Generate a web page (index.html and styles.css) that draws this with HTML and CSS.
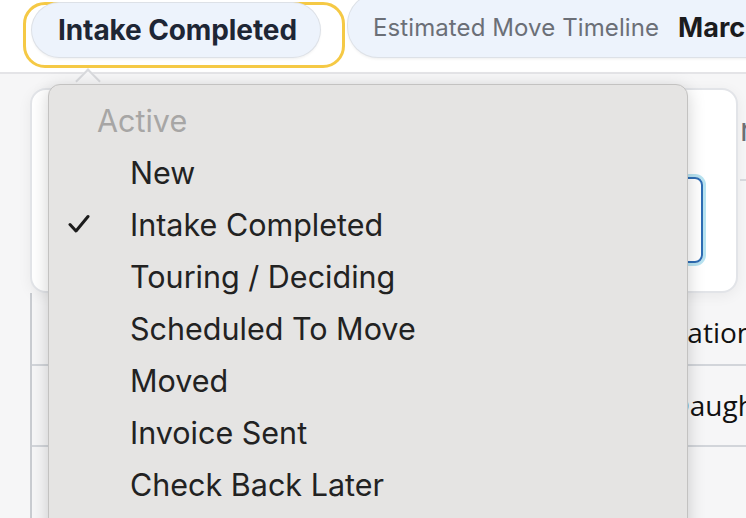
FILE: index.html
```html
<!DOCTYPE html>
<html>
<head>
<meta charset="utf-8">
<link rel="stylesheet" href="styles.css">
</head>
<body>
<header class="topbar">
  <div class="focus-ring">
    <div class="pill pill-status">Intake Completed</div>
  </div>
  <div class="pill pill-timeline">
    <span class="pill-label">Estimated Move Timeline</span>
    <span class="pill-value">March 2025</span>
  </div>
</header>
<main class="content">
  <div class="card-row">
    <section class="card">
      <div class="input-focus"></div>
    </section>
    <div class="side">
      <div class="side-title">r</div>
      <div class="side-line"></div>
    </div>
  </div>
  <div class="table">
    <div class="row row-first"><span class="cell-text">Relation</span></div>
    <div class="row row-second"><span class="cell-text cell-shift">Daughter</span></div>
  </div>
</main>
<div class="caret"></div>
<div class="menu">
  <div class="menu-header">Active</div>
  <div class="menu-item">New</div>
  <div class="menu-item selected">
    <svg class="check" width="22" height="20" viewBox="0 0 22 20"><path d="M2 10.5 L8 17 L20 2.5" fill="none" stroke="#1c1c1c" stroke-width="3" stroke-linecap="round" stroke-linejoin="round"/></svg>
    Intake Completed
  </div>
  <div class="menu-item">Touring / Deciding</div>
  <div class="menu-item">Scheduled To Move</div>
  <div class="menu-item">Moved</div>
  <div class="menu-item">Invoice Sent</div>
  <div class="menu-item">Check Back Later</div>
</div>
</body>
</html>
```

FILE: styles.css
```css
* { box-sizing: border-box; }
html, body {
  margin: 0;
  padding: 0;
}
body {
  width: 746px;
  height: 518px;
  overflow: hidden;
  position: relative;
  background: #f6f6f7;
  font-family: Inter, "Noto Sans", sans-serif;
}
.topbar {
  height: 74px;
  background: #ffffff;
  border-bottom: 2px solid #e4e4e7;
  display: flex;
  align-items: flex-start;
  white-space: nowrap;
  overflow: hidden;
}
.focus-ring {
  margin-left: 23px;
  margin-top: 2px;
  width: 322px;
  height: 66px;
  border: 3px solid #f5c945;
  border-radius: 22px;
  flex: none;
}
.pill {
  background: #edf3fc;
  border-radius: 30px;
  box-shadow: 0 0 0 1px #dde1e7, 0 2px 3px rgba(0, 0, 0, 0.07);
  display: flex;
  align-items: center;
  flex: none;
}
.pill-status {
  margin-left: 6px;
  margin-top: -2px;
  width: 288px;
  height: 54px;
  padding-left: 26px;
  font-size: 28px;
  font-weight: 700;
  color: #1e2635;
  letter-spacing: -0.1px;
}
.pill-timeline {
  margin-left: 3px;
  margin-top: -6px;
  height: 63px;
  padding-left: 25px;
  padding-top: 4px;
  gap: 19px;
}
.pill-label {
  font-size: 24px;
  letter-spacing: 0.1px;
  color: #6b6f77;
}
.pill-value {
  font-size: 27px;
  font-weight: 700;
  color: #1b1b1d;
}
.content {
  padding-left: 30px;
  padding-top: 14px;
}
.card-row {
  display: flex;
  gap: 2px;
}
.card {
  width: 708px;
  height: 205px;
  flex: none;
  background: #ffffff;
  border: 2px solid #e2e4e8;
  border-radius: 16px;
  box-shadow: 0 3px 14px rgba(0, 0, 0, 0.06);
  padding-top: 87px;
  padding-left: 28px;
  padding-right: 33px;
}
.input-focus {
  height: 86px;
  border: 2px solid #2e6db5;
  border-radius: 8px;
  box-shadow: 0 0 0 3px #b8e3f1;
}
.side {
  flex: none;
  width: 40px;
  padding-top: 22px;
  overflow: hidden;
}
.side-title {
  font-size: 32px;
  color: #6c6f76;
  line-height: 40px;
  height: 69px;
}
.side-line {
  border-top: 2px solid #d6d8dc;
}
.table {
  border-left: 2px solid #c9ccd1;
  width: 716px;
  height: 240px;
  font-family: "Open Sans", sans-serif;
  font-size: 28px;
  color: #111111;
  overflow: hidden;
}
.row {
  display: flex;
  justify-content: flex-end;
  border-bottom: 2px solid #d2d5da;
  line-height: 40px;
  white-space: nowrap;
}
.row-first {
  height: 73px;
  padding-top: 19px;
}
.row-second {
  height: 81px;
  padding-top: 19px;
}
.cell-text {
  margin-right: -8px;
}
.cell-shift {
  margin-right: -46px;
}
.caret {
  position: absolute;
  left: 79px;
  top: 72px;
  width: 18px;
  height: 18px;
  transform: rotate(45deg);
  border-top: 2px solid #d9dadd;
  border-left: 2px solid #d9dadd;
  background: #f6f6f7;
}
.menu {
  position: absolute;
  left: 48px;
  top: 84px;
  width: 640px;
  height: 470px;
  background: #e5e4e3;
  border: 1px solid #c3c2c1;
  border-radius: 12px;
  box-shadow: 0 4px 18px rgba(0, 0, 0, 0.18);
  padding-top: 10px;
  font-family: Inter, "Noto Sans", sans-serif;
  font-size: 30.5px;
  color: #222222;
}
.menu-header {
  line-height: 52px;
  padding-left: 48px;
  color: #a7a6a5;
}
.menu-item {
  line-height: 52px;
  padding-left: 81px;
  position: relative;
}
.check {
  position: absolute;
  left: 19px;
  top: 15px;
}
```
